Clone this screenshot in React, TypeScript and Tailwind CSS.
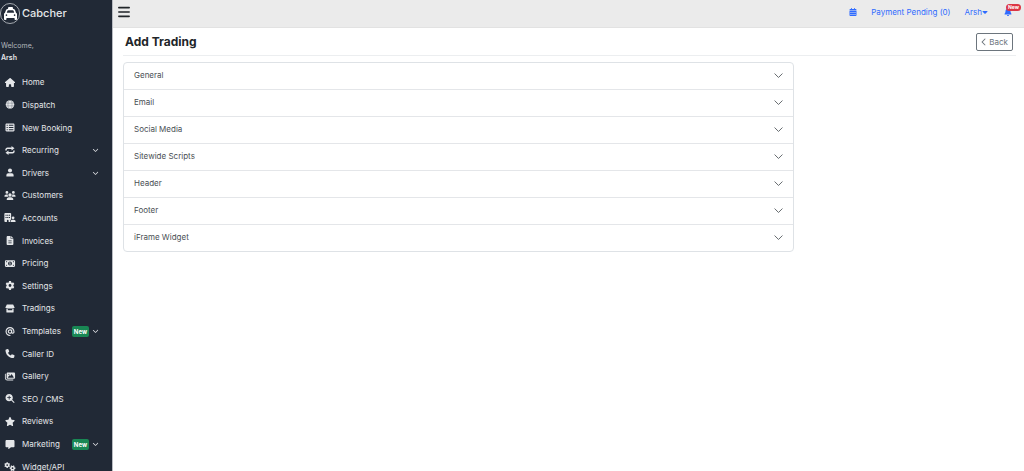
import { useState } from 'react';
import type { IconType } from 'react-icons';
import {
  FaAt,
  FaBars,
  FaBell,
  FaBuildingUser,
  FaCalendarDays,
  FaCaretDown,
  FaChevronDown,
  FaChevronLeft,
  FaFileLines,
  FaGear,
  FaGears,
  FaHouse,
  FaImages,
  FaMagnifyingGlassPlus,
  FaMessage,
  FaMoneyBill1,
  FaPhone,
  FaStar,
  FaTableList,
  FaTaxi,
  FaUsers,
} from 'react-icons/fa6';

interface IconProps {
  className?: string;
}

interface NavItem {
  label: string;
  icon: IconType | ((props: IconProps) => React.ReactNode);
  isNew?: boolean;
  expandable?: boolean;
}

function GlobeIcon({ className }: IconProps) {
  return (
    <svg viewBox="0 0 20 20" className={className} fill="none" stroke="#6c727c" strokeWidth="1">
      <circle cx="10" cy="10" r="9.5" fill="currentColor" stroke="none" />
      <ellipse cx="10" cy="10" rx="4.5" ry="9.5" />
      <path d="M1 7h18M1 13h18" />
    </svg>
  );
}

function RecurringIcon({ className }: IconProps) {
  return (
    <svg viewBox="0 0 20 18" className={className} fill="none" stroke="currentColor" strokeWidth="2.8">
      <path d="M2 9V7.500a3 3 0 0 1 3-3h9M18 9v1.500a3 3 0 0 1-3 3H6" />
      <path d="M13 0l6 4.500-6 4.500zM7 9l-6 4.500L7 18z" fill="currentColor" stroke="none" />
    </svg>
  );
}

function DriverIcon({ className }: IconProps) {
  return (
    <svg viewBox="0 0 16 20" className={className} fill="currentColor">
      <circle cx="8" cy="5.500" r="4.500" />
      <path d="M0 19v-3.500a4 4 0 0 1 4-4h8a4 4 0 0 1 4 4V19z" />
    </svg>
  );
}

function ShopIcon({ className }: IconProps) {
  return (
    <svg viewBox="0 0 20 20" className={className} fill="currentColor">
      <path d="M3 1h14l3 6a1.500 1.500 0 0 1-1.500 2h-17A1.500 1.500 0 0 1 0 7z" />
      <path fillRule="evenodd" d="M2 10h16v7.500a1.500 1.500 0 0 1-1.500 1.500h-13A1.500 1.500 0 0 1 2 17.500zM5 11v3h10v-3z" />
    </svg>
  );
}

const NAV_ITEMS: NavItem[] = [
  { label: 'Home', icon: FaHouse },
  { label: 'Dispatch', icon: GlobeIcon },
  { label: 'New Booking', icon: FaTableList },
  { label: 'Recurring', icon: RecurringIcon, expandable: true },
  { label: 'Drivers', icon: DriverIcon, expandable: true },
  { label: 'Customers', icon: FaUsers },
  { label: 'Accounts', icon: FaBuildingUser },
  { label: 'Invoices', icon: FaFileLines },
  { label: 'Pricing', icon: FaMoneyBill1 },
  { label: 'Settings', icon: FaGear },
  { label: 'Tradings', icon: ShopIcon },
  { label: 'Templates', icon: FaAt, isNew: true, expandable: true },
  { label: 'Caller ID', icon: FaPhone },
  { label: 'Gallery', icon: FaImages },
  { label: 'SEO / CMS', icon: FaMagnifyingGlassPlus },
  { label: 'Reviews', icon: FaStar },
  { label: 'Marketing', icon: FaMessage, isNew: true, expandable: true },
  { label: 'Widget/API', icon: FaGears },
];

const SECTIONS = [
  'General',
  'Email',
  'Social Media',
  'Sitewide Scripts',
  'Header',
  'Footer',
  'iFrame Widget',
];

function Sidebar() {
  return (
    <aside className="h-screen w-28 shrink-0 overflow-hidden bg-[#212936] text-[#e4e6e9]">
      <a href="#" className="flex h-[27px] items-center gap-0.5">
        <span className="flex h-[21px] w-5 items-center justify-center rounded-full border border-[#a5a9b0]">
          <FaTaxi className="h-[13px] w-[13px] text-white" />
        </span>
        <span className="text-[11px] font-medium">Cabcher</span>
      </a>
      <div className="mt-3 h-8 px-px pt-px text-[7px] leading-3">
        <p className="text-[#b3b7bd]">Welcome,</p>
        <p className="font-semibold">Arsh</p>
      </div>
      <nav className="grid h-[407px] auto-rows-fr">
        {NAV_ITEMS.map(({ label, icon: Icon, isNew, expandable }) => (
          <a
            key={label}
            href="#"
            className="flex items-center pr-3 pl-1 text-[8px] leading-none hover:bg-white/5"
          >
            <span className="mr-1 flex w-3 justify-center">
              <Icon className="h-[9px] w-3" />
            </span>
            <span className="pl-0.5">{label}</span>
            <span className="ml-auto flex items-center gap-0.5">
              {isNew && (
                <span className="rounded-xs bg-[#198754] px-0.5 text-[6px] leading-[11px] font-bold text-white">
                  New
                </span>
              )}
              {expandable && <FaChevronDown className="h-1.5 w-[9px]" />}
            </span>
          </a>
        ))}
      </nav>
    </aside>
  );
}

function TopBar() {
  return (
    <header className="flex h-7 items-center border-b border-[#e2e2e2] bg-[#ebebeb] pr-2 pb-1 pl-[5px] text-[8px] text-[#2f6bff]">
      <button type="button" aria-label="Toggle menu" className="text-[#212529]">
        <FaBars className="h-3.5 w-3" />
      </button>
      <div className="ml-auto flex items-center">
        <a href="#" aria-label="Calendar">
          <FaCalendarDays className="h-2 w-2" />
        </a>
        <a href="#" className="ml-3.5">
          Payment Pending (0)
        </a>
        <button type="button" className="ml-3.5 flex items-center">
          Arsh
          <FaCaretDown className="h-2 w-1.5" />
        </button>
        <a href="#" aria-label="Notifications" className="relative mr-1 ml-4">
          <FaBell className="h-2 w-2" />
          <span className="absolute -top-1 left-0.5 rounded-full bg-[#dc3545] px-0.5 text-[5px] leading-[7px] font-bold text-white">
            New
          </span>
        </a>
      </div>
    </header>
  );
}

export default function App() {
  const [open, setOpen] = useState<string | null>(null);

  return (
    <div className="flex bg-white font-[Inter,sans-serif]">
      <Sidebar />
      <div className="min-w-0 flex-1 border-l border-[#b9bcc2]">
        <TopBar />
        <main className="px-2">
          <div className="ml-0.5 flex h-7 items-center justify-between border-b border-[#eceef0] pr-[3px] pl-0.5">
            <h1 className="text-[12px] font-bold text-[#212529]">Add Trading</h1>
            <button
              type="button"
              className="flex h-[18px] items-center gap-0.5 rounded-xs border border-[#6c757d] px-1 text-[8px] text-[#6c757d]"
            >
              <FaChevronLeft className="h-2 w-1.5" />
              Back
            </button>
          </div>
          <div className="mt-1.5 ml-0.5 w-3/4 divide-y divide-[#e4e6e9] rounded-sm border border-[#dee2e6]">
            {SECTIONS.map((title) => (
              <section key={title}>
                <button
                  type="button"
                  aria-expanded={open === title}
                  onClick={() => setOpen(open === title ? null : title)}
                  className="flex h-[26px] w-full items-center justify-between pr-2.5 pb-0.5 pl-2.5 text-[8px] text-[#4a4f54]"
                >
                  {title}
                  <svg viewBox="0 0 16 16" className="h-[9px] w-[9px]" fill="none" stroke="currentColor" strokeWidth="1.5">
                    <path d="M1 4.500l7 7 7-7" />
                  </svg>
                </button>
                {open === title && <div className="h-10 border-t border-[#e4e6e9]" />}
              </section>
            ))}
          </div>
        </main>
      </div>
    </div>
  );
}
